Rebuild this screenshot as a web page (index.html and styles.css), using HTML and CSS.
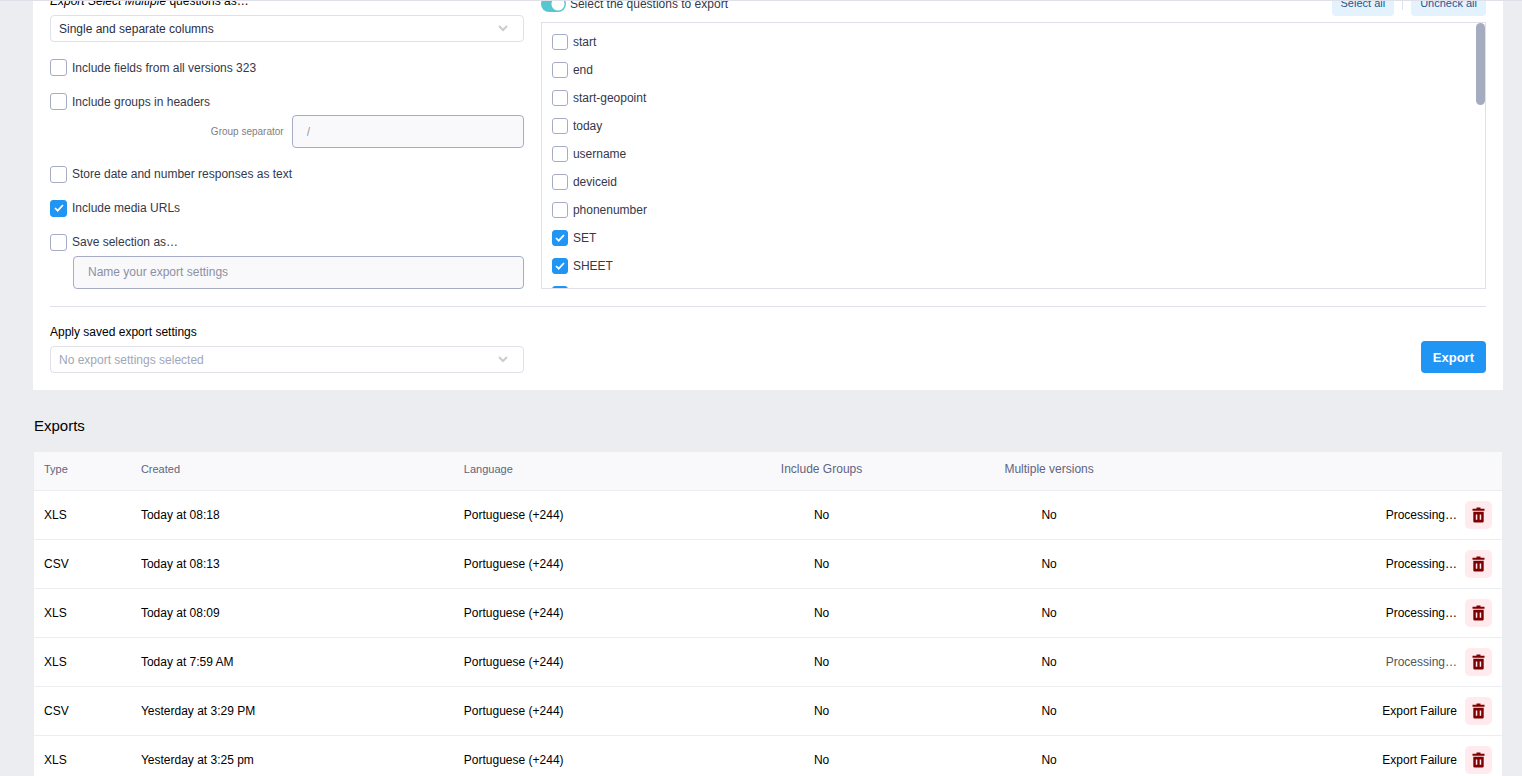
FILE: index.html
```html
<!DOCTYPE html>
<html lang="en">
<head>
    <meta charset="UTF-8">
    <meta name="viewport" content="width=device-width, initial-scale=1.0">
    <title>Downloads</title>
    <link rel="stylesheet" href="styles.css">
</head>
<body>
    <svg class="sprite" aria-hidden="true">
        <symbol id="trash" viewBox="0 0 13 16">
            <path d="M4.500 0.500h4v1.300h4V3.700H0.500V1.800h4z"/>
            <path fill-rule="evenodd" d="M1.300 4.700h10.400v9.500q0 1.300-1.300 1.300H2.600q-1.300 0-1.300-1.300zM3.800 7.500v5.300h1.500V7.500zM7.700 7.500v5.300h1.500V7.500z"/>
        </symbol>
    </svg>

    <main class="page">
        <form class="panel">
            <div class="columns">
                <div class="options">
                    <div>
                        <label class="field-label" for="multiple"><em>Export Select Multiple</em> questions as…</label>
                        <select class="select" id="multiple">
                            <option>Single and separate columns</option>
                        </select>
                    </div>

                    <label class="check"><input type="checkbox"> Include fields from all versions 323</label>

                    <div>
                        <label class="check"><input type="checkbox"> Include groups in headers</label>
                        <div class="separator">
                            <label for="separator">Group separator</label>
                            <input class="text-input" type="text" id="separator" value="/" disabled>
                        </div>
                    </div>

                    <label class="check"><input type="checkbox"> Store date and number responses as text</label>

                    <label class="check"><input type="checkbox" checked> Include media URLs</label>

                    <div>
                        <label class="check"><input type="checkbox" id="save"> Save selection as…</label>
                        <div class="save-name">
                            <input class="text-input" type="text" aria-label="Name your export settings" placeholder="Name your export settings">
                        </div>
                    </div>
                </div>

                <div class="questions">
                    <div class="questions-header">
                        <label class="switch"><input type="checkbox" checked> Select the questions to export</label>
                        <div class="bulk">
                            <button type="button" class="bulk-button">Select all</button>
                            <span class="divider"></span>
                            <button type="button" class="bulk-button">Uncheck all</button>
                        </div>
                    </div>
                    <div class="question-list">
                        <label class="check"><input type="checkbox"> start</label>
                        <label class="check"><input type="checkbox"> end</label>
                        <label class="check"><input type="checkbox"> start-geopoint</label>
                        <label class="check"><input type="checkbox"> today</label>
                        <label class="check"><input type="checkbox"> username</label>
                        <label class="check"><input type="checkbox"> deviceid</label>
                        <label class="check"><input type="checkbox"> phonenumber</label>
                        <label class="check"><input type="checkbox" checked> SET</label>
                        <label class="check"><input type="checkbox" checked> SHEET</label>
                        <label class="check"><input type="checkbox" checked></label>
                        <span class="scroll-thumb"></span>
                    </div>
                </div>
            </div>

            <div class="panel-footer">
                <div class="saved">
                    <label class="field-label" for="saved">Apply saved export settings</label>
                    <select class="select select-empty" id="saved">
                        <option>No export settings selected</option>
                    </select>
                </div>
                <button type="submit" class="export-button">Export</button>
            </div>
        </form>

        <section class="exports">
            <h2>Exports</h2>
            <table>
                <thead>
                    <tr>
                        <th class="col-type">Type</th>
                        <th class="col-created">Created</th>
                        <th class="col-language">Language</th>
                        <th class="col-flag">Include Groups</th>
                        <th class="col-flag">Multiple versions</th>
                        <th></th>
                    </tr>
                </thead>
                <tbody>
                    <tr>
                        <td>XLS</td>
                        <td>Today at 08:18</td>
                        <td>Portuguese (+244)</td>
                        <td class="flag">No</td>
                        <td class="flag">No</td>
                        <td><div class="actions">Processing… <button type="button" class="delete" aria-label="Delete"><svg><use href="#trash"/></svg></button></div></td>
                    </tr>
                    <tr>
                        <td>CSV</td>
                        <td>Today at 08:13</td>
                        <td>Portuguese (+244)</td>
                        <td class="flag">No</td>
                        <td class="flag">No</td>
                        <td><div class="actions">Processing… <button type="button" class="delete" aria-label="Delete"><svg><use href="#trash"/></svg></button></div></td>
                    </tr>
                    <tr>
                        <td>XLS</td>
                        <td>Today at 08:09</td>
                        <td>Portuguese (+244)</td>
                        <td class="flag">No</td>
                        <td class="flag">No</td>
                        <td><div class="actions">Processing… <button type="button" class="delete" aria-label="Delete"><svg><use href="#trash"/></svg></button></div></td>
                    </tr>
                    <tr>
                        <td>XLS</td>
                        <td>Today at 7:59 AM</td>
                        <td>Portuguese (+244)</td>
                        <td class="flag">No</td>
                        <td class="flag">No</td>
                        <td><div class="actions faded">Processing… <button type="button" class="delete" aria-label="Delete"><svg><use href="#trash"/></svg></button></div></td>
                    </tr>
                    <tr>
                        <td>CSV</td>
                        <td>Yesterday at 3:29 PM</td>
                        <td>Portuguese (+244)</td>
                        <td class="flag">No</td>
                        <td class="flag">No</td>
                        <td><div class="actions">Export Failure <button type="button" class="delete" aria-label="Delete"><svg><use href="#trash"/></svg></button></div></td>
                    </tr>
                    <tr>
                        <td>XLS</td>
                        <td>Yesterday at 3:25 pm</td>
                        <td>Portuguese (+244)</td>
                        <td class="flag">No</td>
                        <td class="flag">No</td>
                        <td><div class="actions">Export Failure <button type="button" class="delete" aria-label="Delete"><svg><use href="#trash"/></svg></button></div></td>
                    </tr>
                </tbody>
            </table>
        </section>
    </main>
</body>
</html>
```
FILE: styles.css
```css
* {
    margin: 0;
    padding: 0;
    box-sizing: border-box;
}

body {
    background-color: #ecedf1;
    color: #000000;
    font-family: "Liberation Sans", Arial, sans-serif;
    font-size: 12px;
}

input,
select,
button {
    font: inherit;
}

button {
    border: none;
    cursor: pointer;
}

.sprite {
    display: none;
}

.page {
    height: 100vh;
    overflow: hidden;
    border-top: 1px solid #dfe0e9;
    padding: 0 19px 0 33px;
}

/* Export form, scrolled partly under the top edge */
.panel {
    margin-top: -28px;
    padding: 17px;
    background-color: #ffffff;
}

.columns {
    display: grid;
    grid-template-columns: 33% 1fr;
    gap: 17px;
    padding-bottom: 17px;
    border-bottom: 1px solid #dfe0e9;
}

.options {
    display: flex;
    flex-direction: column;
    justify-content: space-between;
}

.field-label {
    display: block;
    line-height: 22px;
    margin-bottom: 3px;
}

.select {
    display: block;
    width: 100%;
    height: 27px;
    padding: 0 8px;
    border: 1px solid #dfe0e9;
    border-radius: 4px;
    appearance: none;
    color: #2b2f3f;
    background: #ffffff url("data:image/svg+xml,%3Csvg xmlns='http://www.w3.org/2000/svg' width='10' height='7'%3E%3Cpath d='M1 1l4 4 4-4' fill='none' stroke='%23cccccc' stroke-width='2'/%3E%3C/svg%3E") no-repeat right 15px center;
}

.select-empty {
    color: #a1a6b8;
}

.check {
    display: flex;
    align-items: center;
    gap: 5px;
    height: 16px;
    color: #34384b;
}

.options .check {
    height: 17px;
}

.check input {
    flex: none;
    width: 16px;
    height: 16px;
    border: 1px solid #a6acc4;
    border-radius: 3px;
    appearance: none;
    background-color: #ffffff;
}

.options .check input {
    width: 17px;
    height: 17px;
}

.check input:checked {
    border-color: #2095f3;
    background: #2095f3 url("data:image/svg+xml,%3Csvg xmlns='http://www.w3.org/2000/svg' width='10' height='8'%3E%3Cpath d='M1 4l2.700 2.700L9 1' fill='none' stroke='%23ffffff' stroke-width='1.700'/%3E%3C/svg%3E") no-repeat center;
}

.text-input {
    width: 100%;
    height: 33px;
    padding: 0 14px;
    border: 1px solid #a6acc4;
    border-radius: 4px;
    background-color: #f9f9fb;
    color: #999999;
}

.text-input::placeholder {
    color: #8b90a3;
}

.separator {
    display: flex;
    align-items: center;
    justify-content: flex-end;
    gap: 8px;
    margin-top: 5px;
    color: #808080;
    font-size: 10px;
}

.separator .text-input {
    width: 49%;
    font-size: 12px;
}

.save-name {
    margin-top: 5px;
    padding-left: 23px;
}

.questions-header {
    display: flex;
    justify-content: space-between;
    align-items: flex-end;
    height: 26px;
    margin-bottom: 6px;
}

.switch {
    display: flex;
    align-items: center;
    gap: 4px;
    height: 24px;
    color: #34384b;
}

.switch input {
    width: 25px;
    height: 16px;
    border-radius: 8px;
    appearance: none;
    background: radial-gradient(circle at 17px 8px, #ffffff 6px, #56c6d0 7px);
}

.bulk {
    display: flex;
    align-items: center;
    gap: 8px;
}

.bulk-button {
    height: 26px;
    padding: 0 9px;
    border-radius: 4px;
    background-color: #e4f2fe;
    color: #1e5793;
    font-size: 11px;
}

.divider {
    width: 1px;
    height: 14px;
    background-color: #dfe0e9;
}

.question-list {
    position: relative;
    display: flex;
    flex-direction: column;
    gap: 12px;
    height: 267px;
    padding: 11px 10px;
    overflow: hidden;
    border: 1px solid #dfe0e9;
}

.question-list .check {
    flex: none;
}

.scroll-thumb {
    position: absolute;
    top: 0;
    right: 0;
    width: 9px;
    height: 82px;
    border-radius: 5px;
    background-color: #a6acc0;
}

.panel-footer {
    display: flex;
    justify-content: space-between;
    align-items: flex-end;
    padding-top: 14px;
}

.saved {
    width: 33%;
}

.export-button {
    height: 32px;
    padding: 0 12px;
    border-radius: 4px;
    background-color: #2095f3;
    color: #ffffff;
    font-size: 13px;
    font-weight: bold;
}

/* List of past exports */
.exports {
    padding: 26px 1px 0;
}

.exports h2 {
    margin-bottom: 16px;
    font-size: 15px;
    font-weight: normal;
    line-height: 20px;
}

table {
    width: 100%;
    table-layout: fixed;
    border-collapse: separate;
    border-spacing: 0;
    background-color: #ffffff;
}

th,
td {
    padding: 0 10px;
    border-bottom: 1px solid #ecedf1;
    text-align: left;
}

th {
    height: 39px;
    padding-bottom: 4px;
    background-color: #f9f9fb;
    color: #5f6480;
    font-size: 11px;
    font-weight: normal;
}

td {
    height: 49px;
}

.col-type {
    width: 6.6%;
}

.col-created {
    width: 22%;
}

.col-language {
    width: 17.3%;
}

.col-flag {
    width: 15.5%;
    font-size: 12px;
    text-align: center;
}

.flag {
    text-align: center;
}

.actions {
    display: flex;
    justify-content: flex-end;
    align-items: center;
    gap: 8px;
}

.faded {
    color: #555555;
}

.delete {
    display: flex;
    align-items: center;
    justify-content: center;
    width: 27px;
    height: 28px;
    border-radius: 5px;
    background-color: #ffebed;
    color: #7f0000;
}

.delete svg {
    width: 13px;
    height: 16px;
    fill: currentColor;
}
```
